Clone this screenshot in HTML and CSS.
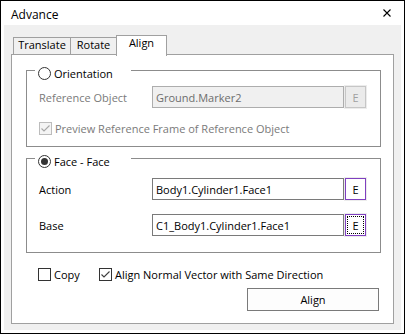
FILE: index.html
```html
<!DOCTYPE html>
<html>
<head>
<meta charset="utf-8">
<title>Advance</title>
<link rel="stylesheet" href="styles.css">
</head>
<body>
<div class="window">
  <div class="titlebar">
    <span class="title">Advance</span>
    <svg class="close" width="8" height="8" viewBox="0 0 8 8"><path d="M0.5 0.5L7.5 7.5M7.5 0.5L0.5 7.5" stroke="#000" stroke-width="1.1" fill="none"/></svg>
  </div>
  <div class="client">
    <div class="tabs">
      <div class="tab tab-first">Translate</div>
      <div class="tab tab-mid">Rotate</div>
      <div class="tab tab-active">Align</div>
    </div>
    <div class="panel">
      <fieldset class="group g1">
        <legend class="legend"><span class="legend-inner"><span class="radio"></span><span class="legend-text">Orientation</span></span></legend>
        <div class="row r-ref">
          <span class="label disabled">Reference Object</span>
          <div class="field field-disabled">Ground.Marker2</div>
          <div class="ebtn ebtn-disabled">E</div>
        </div>
        <div class="check-row r-preview">
          <span class="check check-disabled"><svg width="11" height="11" viewBox="0 0 11 11"><path d="M1.5 5.5L4 8L9.5 2.5" stroke="#a6a6a6" stroke-width="1.1" fill="none"/></svg></span>
          <span class="disabled">Preview Reference Frame of Reference Object</span>
        </div>
      </fieldset>
      <fieldset class="group g2">
        <legend class="legend"><span class="legend-inner"><span class="radio radio-on"><span class="dot"></span></span><span class="legend-text">Face - Face</span></span></legend>
        <div class="row r-action">
          <span class="label">Action</span>
          <div class="field">Body1.Cylinder1.Face1</div>
          <div class="ebtn ebtn-on">E</div>
        </div>
        <div class="row r-base">
          <span class="label">Base</span>
          <div class="field">C1_Body1.Cylinder1.Face1</div>
          <div class="ebtn ebtn-on ebtn-focus">E</div>
        </div>
      </fieldset>
      <div class="options">
        <div class="opt opt-copy">
          <span class="check"></span>
          <span>Copy</span>
        </div>
        <div class="opt">
          <span class="check"><svg width="11" height="11" viewBox="0 0 11 11"><path d="M1.5 5.5L4 8L9.5 2.5" stroke="#3c3c3c" stroke-width="1.1" fill="none"/></svg></span>
          <span>Align Normal Vector with Same Direction</span>
        </div>
      </div>
      <div class="actions">
        <div class="btn">Align</div>
      </div>
    </div>
  </div>
</div>
</body>
</html>
```
FILE: styles.css
```css
* { box-sizing: border-box; }
html, body { margin: 0; padding: 0; }
body {
  font-family: "Open Sans", "Noto Sans", sans-serif;
  font-size: 11px;
  color: #000;
  background: #fff;
}
.window {
  width: 405px;
  height: 334px;
  border: 1px solid #000;
  background: #fff;
  display: flex;
  flex-direction: column;
}
.titlebar {
  height: 24px;
  flex-shrink: 0;
  display: flex;
}
.title {
  flex: 1;
  font-size: 12px;
  line-height: 16px;
  padding: 6px 0 0 10px;
}
.close { margin: 8px 13px 0 0; }
.client {
  flex: 1;
  margin: 0 3px 3px;
  background: #f0f0f0;
  padding: 10px 7px 6px;
  display: flex;
  flex-direction: column;
}
.tabs {
  height: 19px;
  flex-shrink: 0;
  display: flex;
  align-items: flex-end;
  padding-left: 2px;
}
.tab {
  height: 17px;
  border-top: 1px solid #a0a0a0;
  line-height: 14px;
  padding-bottom: 2px;
  text-align: center;
  background: #f0f0f0;
  white-space: nowrap;
}
.tab-first {
  width: 58px;
  border-left: 1px solid #a0a0a0;
  border-right: 1px solid #a0a0a0;
}
.tab-mid { width: 45px; }
.tab-active {
  width: 51px;
  height: 21px;
  margin-bottom: -2px;
  padding-bottom: 6px;
  border-left: 1px solid #a0a0a0;
  border-right: 1px solid #a0a0a0;
  background: #fff;
  position: relative;
  z-index: 1;
}
.panel {
  flex: 1;
  background: #fff;
  border: 1px solid #a0a0a0;
  padding: 6px 12px 0 14px;
  display: flex;
  flex-direction: column;
}
.group {
  margin: 0;
  padding: 0 11px 11px 12px;
  border: 1px solid #8c8c8c;
  min-width: 0;
}
.g2 { margin-top: 2px; padding-bottom: 16px; }
.legend {
  width: 96px;
  margin-left: -4px;
  padding: 6px 0 0 3px;
}
.legend-inner {
  display: flex;
  align-items: center;
  height: 13px;
  line-height: 13px;
}
.radio {
  width: 13px;
  height: 13px;
  border: 1px solid #333;
  border-radius: 50%;
  background: #fff;
  margin-right: 3px;
  flex-shrink: 0;
  display: flex;
  align-items: center;
  justify-content: center;
}
.dot {
  width: 7px;
  height: 7px;
  border-radius: 50%;
  background: #333;
}
.legend-text { white-space: nowrap; }
.row {
  display: flex;
  align-items: center;
  height: 22px;
}
.r-ref { margin-top: 6px; }
.r-action { margin-top: 10px; }
.r-base { margin-top: 14px; }
.label {
  width: 113px;
  flex-shrink: 0;
  white-space: nowrap;
}
.disabled { color: #7a7a7a; }
.field {
  width: 192px;
  height: 22px;
  border: 1px solid #7a7a7a;
  background: #fff;
  padding: 0 3px;
  display: flex;
  align-items: center;
  white-space: nowrap;
  overflow: hidden;
}
.field-disabled {
  background: #f0f0f0;
  border-color: #adadad;
  color: #6d6d6d;
}
.ebtn {
  width: 21px;
  height: 22px;
  margin-left: 1px;
  border: 1px solid #7f3fbf;
  background: #fff;
  display: flex;
  align-items: center;
  justify-content: center;
  box-shadow: 0 0 0 1px #ececec;
}
.ebtn-disabled {
  border-color: #c6c6c6;
  background: #ebebeb;
  color: #a0a0a0;
}
.ebtn-focus {
  outline: 1px dotted #000;
  outline-offset: -3px;
}
.check-row {
  display: flex;
  align-items: center;
  height: 13px;
  line-height: 13px;
  white-space: nowrap;
}
.r-preview { margin-top: 14px; }
.check {
  width: 13px;
  height: 13px;
  border: 1px solid #333;
  background: #fff;
  margin-right: 3px;
  flex-shrink: 0;
  display: flex;
}
.check-disabled {
  border-color: #bcbcbc;
  background: #f4f4f4;
}
.options {
  display: flex;
  align-items: center;
  height: 13px;
  line-height: 13px;
  margin-top: 15px;
  padding-left: 12px;
  white-space: nowrap;
}
.opt {
  display: flex;
  align-items: center;
}
.opt-copy { width: 61px; }
.actions {
  display: flex;
  justify-content: flex-end;
  margin-top: 7px;
}
.btn {
  width: 132px;
  height: 23px;
  margin-right: 2px;
  border: 1px solid #7a7a7a;
  background: #fdfdfd;
  display: flex;
  align-items: center;
  justify-content: center;
}
```
